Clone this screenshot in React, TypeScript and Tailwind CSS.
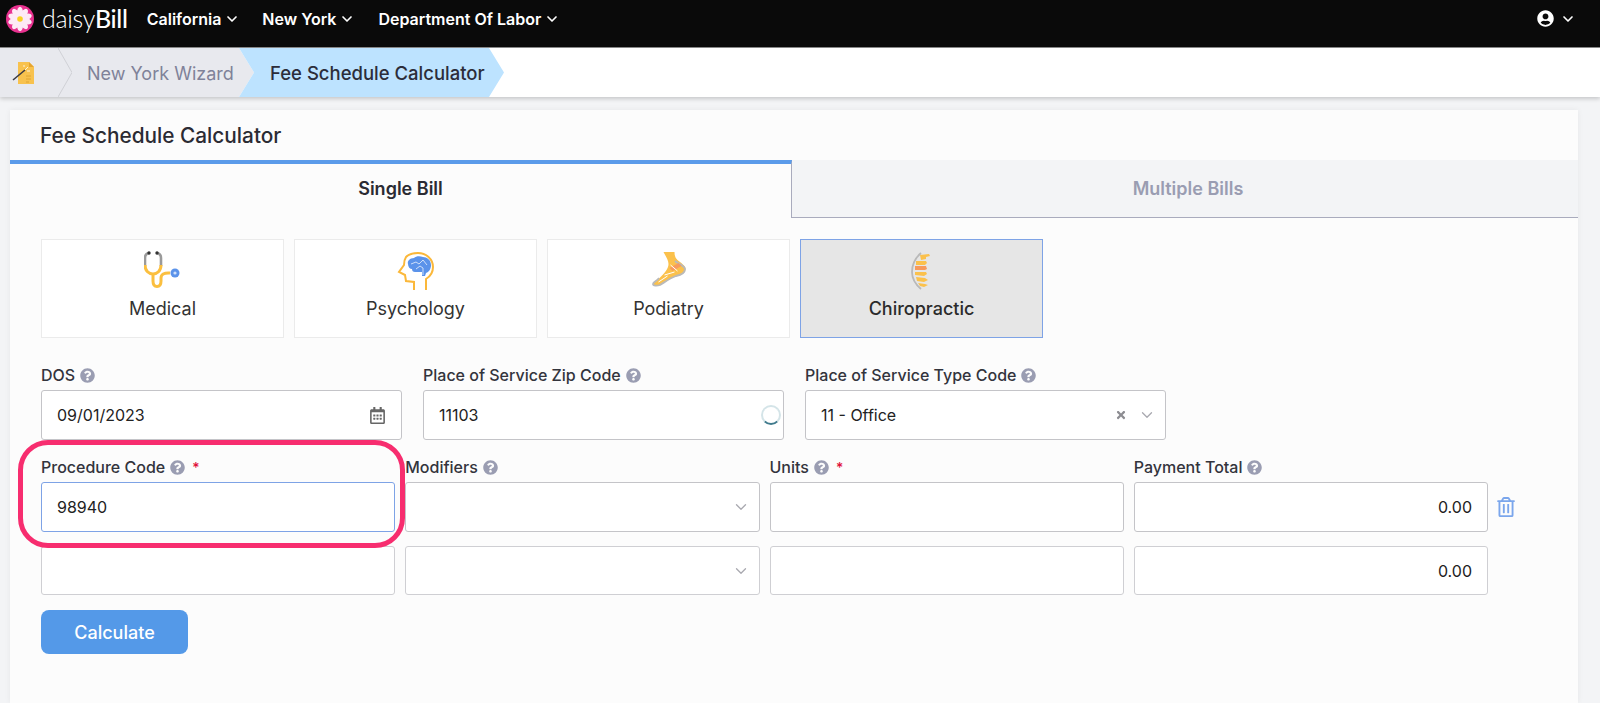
import React from "react";
import { ChevronDown } from "lucide-react";
import { FaQuestionCircle, FaRegCalendarAlt, FaRegTrashAlt, FaUserCircle, FaTimes } from "react-icons/fa";

const DaisyLogo = () => (
  <svg width="28" height="28" viewBox="0 0 28 28">
    <circle cx="14" cy="14" r="14" fill="#e8318f" />
    {[0, 36, 72, 108, 144, 180, 216, 252, 288, 324].map((a) => (
      <ellipse key={a} cx="14" cy="7.2" rx="3" ry="5.4" fill="#fdeaf4" transform={`rotate(${a} 14 14)`} />
    ))}
    <circle cx="14" cy="14" r="2.8" fill="#f8d21f" />
  </svg>
);

const WizardDoc = () => (
  <svg width="26" height="28" viewBox="0 0 26 28">
    <path d="M7 3h11l5 5v17H7z" fill="#f8c24e" />
    <path d="M18 3l5 5h-5z" fill="#e6a52f" />
    <path d="M2 21L14 11" stroke="#3a3a44" strokeWidth="1.6" />
    <path d="M14 11l3-3M16 12l3 0M13 8l0-2" stroke="#fff" strokeWidth="0.8" />
    <path d="M15 17h5M15 20h5M15 23h3" stroke="#d99f2c" strokeWidth="0.8" />
  </svg>
);

const Stethoscope = () => (
  <svg width="38" height="42" viewBox="2 0 38 42" fill="none">
    <path d="M7 3C4 3.500 3 5 3 8v8" stroke="#9a9a9a" strokeWidth="2.600" />
    <path d="M15 3c3 .5 4 2 4 5v8" stroke="#9a9a9a" strokeWidth="2.600" />
    <circle cx="7" cy="3" r="1.700" fill="#333" />
    <circle cx="15" cy="3" r="1.700" fill="#333" />
    <path d="M3 15c0 6 4 9 8 9s8-3 8-9" stroke="#fbbf3f" strokeWidth="3" />
    <path d="M11 24v7c0 4 2 5.500 4 5.500s4-1.500 4-5.500v-3c0-3.500 3-5.500 9-5" stroke="#fbbf3f" strokeWidth="3" />
    <circle cx="33" cy="23" r="4.500" fill="#5b93ea" />
    <circle cx="33" cy="23" r="1.600" fill="#cfe0fb" />
  </svg>
);

const BrainHead = () => (
  <svg width="70" height="42" viewBox="0 10 70 42" fill="none">
    <path d="M33 50v-8l-8-1-1-6-6-3 5-7c0-3 0-5 2-8 3-3 7-4 12-4 8 0 15 6 15 14 0 5-2 9-7 12v11" stroke="#fbb83a" strokeWidth="2" />
    <path d="M27 24c-1-3 2-6 6-6 2-2 6-2 9-1 4 0 8 3 8 8 0 4-2 7-5 8l-1 3h-3v-4h-7c-2 0-3-1-3-3-2 0-4-2-4-5z" fill="#5b93ea" />
    <path d="M30 24l5-2 3 2 4-4 4 5M35 29l4-3 3 2v7" stroke="#dbe8fb" strokeWidth="0.9" />
  </svg>
);

const Foot = () => (
  <svg width="60" height="42" viewBox="-2.500 5 60 42" fill="none">
    <path d="M22 7h11c0 4 1 6 3 8 3 3 8 5 8 9 0 4-4 6-9 7-6 2-11 6-16 9-3 1-7 1-7-1 0-2 4-3 6-6 5-5 9-9 9-14 0-4-3-8-5-12z" fill="#fbc14c" />
    <path d="M33.500 16c2 2 10 5 10 8 0 4-4 6-9 7-6 2-11 6-16 9-3 1-7 1-7-1 0-2 4-3 6-6" stroke="#b9b9b9" strokeWidth="1.800" strokeLinejoin="round" />
    <path d="M28 23l9-5 3 3-9 5z" fill="#f79a5c" />
    <path d="M29 20l7 6M23 30l10-3M17 37l9-6" stroke="#fff" strokeWidth="1" />
  </svg>
);

const Spine = () => (
  <svg width="22" height="38" viewBox="0 0 22 38" fill="none">
    <path d="M10 1C3 7 1 13 1 20s3 12 9 17" stroke="#b9b9b9" strokeWidth="1.800" />
    <path d="M9 3l9-1 1 2-4 1v2l-5 1z" fill="#fbc14c" />
    <path d="M5 9l10 0 1 2-2 2-9 0z" fill="#fbc14c" />
    <path d="M4 14l11 0 1 3-2 1-10 0z" fill="#f79a5c" />
    <path d="M4 20l11 0 1 2-3 2-9-1z" fill="#fbc14c" />
    <path d="M5 25l9 1 3 2-4 2-7-1z" fill="#fbc14c" />
    <path d="M7 31l7 1 3 1-4 2-4-1z" fill="#fbc14c" />
  </svg>
);

const NavItem = ({ label, className }: { label: string; className: string }) => (
  <div className={`flex items-center gap-[3px] text-[16px] font-semibold text-white ${className}`}>
    <span>{label}</span>
    <ChevronDown className="h-4 w-4" strokeWidth={2.5} />
  </div>
);

const Label = ({ text, required }: { text: string; required?: boolean }) => (
  <div className="flex h-[18px] items-center gap-[5px] text-[16px] font-medium text-[#33343c]">
    <span>{text}</span>
    <FaQuestionCircle className="text-[15px] text-[#9a9db2]" />
    {required && <span className="ml-[2px] text-[14px] text-[#e0103a]">*</span>}
  </div>
);

const Tile = ({ label, icon, active }: { label: string; icon: React.ReactNode; active?: boolean }) => (
  <div
    className={`flex h-[99px] flex-1 flex-col items-center border pt-[10px] text-[18px] leading-[24px] ${
      active ? "border-[#7ea3e6] bg-[#e6e6e6] font-medium text-[#2b2b2b]" : "border-[#ebebeb] bg-white text-[#333]"
    }`}
  >
    <div className="flex h-[42px] items-center justify-center">{icon}</div>
    <div className="mt-[5px]">{label}</div>
  </div>
);

const inputBase = "flex items-center rounded-[3px] border bg-white pl-[15px] text-[16px] text-[#222]";
const inputBox = `${inputBase} h-[50px] border-[#c4c4c8]`;
const inputBoxLow = `${inputBase} h-[49px] border-[#cfcfd3]`;

const SelectChevron = ({ className = "ml-auto" }: { className?: string }) => (
  <ChevronDown className={`h-[18px] w-[18px] text-[#a9a9b0] ${className}`} strokeWidth={1.75} />
);

export default function App() {
  return (
    <div className="flex h-[703px] w-[1600px] flex-col overflow-hidden bg-[#f3f4f6] font-['Inter','Noto_Sans',sans-serif]">
      {/* Top nav */}
      <header className="flex h-[48px] items-center border-b border-[#8a8a8a] bg-[#0a0a0a] pb-[10px] pl-[6px] pr-[24px]">
        <DaisyLogo />
        <div className="ml-[8px] font-['Lato',sans-serif] text-[25px] leading-none font-light tracking-[-0.3px] text-white">
          daisy<span className="font-medium">Bill</span>
        </div>
        <NavItem label="California" className="ml-[19px]" />
        <NavItem label="New York" className="ml-[22px]" />
        <NavItem label="Department Of Labor" className="ml-[23px]" />
        <div className="ml-auto flex items-center gap-[6px] text-white">
          <FaUserCircle className="text-[17px]" />
          <ChevronDown className="h-4 w-4" strokeWidth={2.5} />
        </div>
      </header>

      {/* Breadcrumbs */}
      <nav className="flex h-[49px] shrink-0 bg-white shadow-[0_2px_4px_rgba(0,0,0,0.18)]">
        <div className="flex w-[254px] items-center bg-[#e8e9ee] [clip-path:polygon(0_0,239px_0,100%_50%,239px_100%,0_100%)]">
          <div className="flex w-[58px] pl-[11px]">
            <WizardDoc />
          </div>
          <svg width="14" height="49" viewBox="0 0 14 49" fill="none">
            <path d="M0 0L14 24.500L0 49" stroke="#cfd0d6" />
          </svg>
          <span className="ml-[15px] pt-[2px] text-[18px] text-[#7f8299]">New York Wizard</span>
        </div>
        <div className="-ml-[15px] flex w-[265px] items-center bg-[#bde3ff] pl-[31px] pt-[2px] text-[18.5px] font-medium text-[#2c2d3a] [clip-path:polygon(0_0,250px_0,100%_50%,250px_100%,0_100%,15px_50%)]">
          Fee Schedule Calculator
        </div>
      </nav>

      {/* Card */}
      <main className="ml-[10px] mt-[13px] flex w-[1568px] flex-1 flex-col bg-[#fcfcfc] shadow-[0_0_6px_rgba(0,0,0,0.06)]">
        <div className="flex h-[50px] items-center pl-[30px] pt-[2px] text-[20.8px] font-medium text-[#2b2b33]">Fee Schedule Calculator</div>
        <div className="flex h-[58px] text-[18px] font-semibold">
          <div className="flex w-[782px] items-center justify-center border-t-[4px] border-r border-t-[#5b9bea] border-r-[#a9abbd] pb-[6px] text-[#2b2b33]">
            Single Bill
          </div>
          <div className="flex flex-1 items-center justify-center border-b border-[#a9abbd] bg-[#f3f4f6] pl-[6px] text-[#9a9db2]">Multiple Bills</div>
        </div>

        <div className="relative flex-1 pl-[31px] pt-[21px]">
          <div className="flex w-[1002px] gap-[10px]">
            <Tile label="Medical" icon={<Stethoscope />} />
            <Tile label="Psychology" icon={<BrainHead />} />
            <Tile label="Podiatry" icon={<Foot />} />
            <Tile label="Chiropractic" icon={<Spine />} active />
          </div>

          <div className="mt-[28px] flex w-[1125px] gap-[21px]">
            <div className="flex-1">
              <Label text="DOS" />
              <div className={`mt-[6px] pr-[15px] ${inputBox}`}>
                09/01/2023
                <FaRegCalendarAlt className="ml-auto text-[17px] text-[#666]" />
              </div>
            </div>
            <div className="flex-1">
              <Label text="Place of Service Zip Code" />
              <div className={`mt-[6px] pr-[2px] ${inputBox}`}>
                11103
                <div className="ml-auto h-[20px] w-[20px] rounded-full border-2 border-[#d4e4e8] border-b-[#3f7a8c]" />
              </div>
            </div>
            <div className="flex-1">
              <Label text="Place of Service Type Code" />
              <div className={`mt-[6px] pr-[9px] ${inputBox}`}>
                11 - Office
                <FaTimes className="ml-auto text-[12px] text-[#8d8d92]" />
                <SelectChevron className="ml-[11px]" />
              </div>
            </div>
          </div>

          <div className="mt-[18px] grid w-[1447px] grid-cols-4 gap-x-[10px]">
            <Label text="Procedure Code" required />
            <Label text="Modifiers" />
            <Label text="Units" required />
            <Label text="Payment Total" />
          </div>
          <div className="mt-[6px] grid w-[1447px] grid-cols-4 gap-x-[10px] gap-y-[14px]">
            <div className={`${inputBase} h-[50px] border-[#7ea3e6]`}>98940</div>
            <div className={`pr-[9px] ${inputBox}`}>
              <SelectChevron />
            </div>
            <div className={inputBox} />
            <div className={`justify-end pr-[15px] ${inputBox}`}>0.00</div>
            <div className={inputBoxLow} />
            <div className={`pr-[9px] ${inputBoxLow}`}>
              <SelectChevron />
            </div>
            <div className={inputBoxLow} />
            <div className={`justify-end pr-[15px] ${inputBoxLow}`}>0.00</div>
          </div>
          <FaRegTrashAlt className="absolute left-[1486px] top-[279px] text-[20px] text-[#7ba6ec]" />

          <button className="mt-[15px] h-[44px] w-[147px] rounded-[8px] bg-[#5499e8] text-[18px] font-medium text-white">Calculate</button>

          {/* Pink highlight annotation */}
          <div className="absolute left-[8px] top-[222px] h-[108px] w-[387px] rounded-[30px] border-[5px] border-[#f72d6f]" />
        </div>
      </main>
    </div>
  );
}
